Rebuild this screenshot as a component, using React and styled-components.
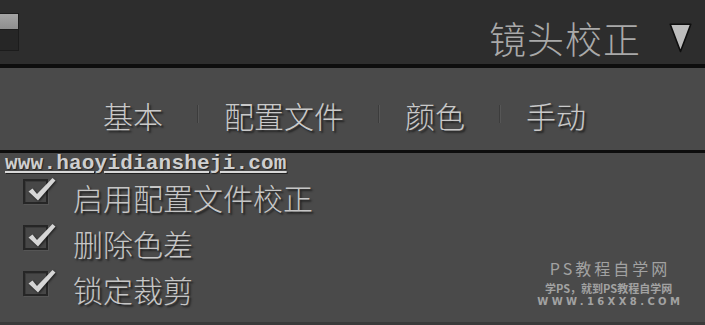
import React from "react";
import styled, { createGlobalStyle } from "styled-components";

const Global = createGlobalStyle`
  html, body { margin: 0; padding: 0; background: #4a4a4a; }
  body { font-family: "Noto Sans CJK SC", "Noto Sans", sans-serif; }
`;

const Frame = styled.div`
  width: 705px;
  height: 325px;
  overflow: hidden;
  display: flex;
  flex-direction: column;
  background: #4a4a4a;
`;

const Header = styled.header`
  height: 64px;
  flex: none;
  background: #2d2d2d;
  display: flex;
  align-items: flex-start;
`;

const Toggle = styled.div`
  margin-top: 13px;
  width: 19px;
  height: 38px;
  box-sizing: border-box;
  border: 1px solid #1c1c1c;
  border-left: none;
  background: #262626;
  display: flex;
  flex-direction: column;
`;

const ToggleKnob = styled.div`
  height: 15px;
  background: linear-gradient(#a4a4a4, #8e8e8e);
  border-bottom: 1px solid #1c1c1c;
`;

const Title = styled.h1`
  margin: 20px 0 0 auto;
  font-size: 37px;
  line-height: 1;
  font-weight: 300;
  color: #a9a9a9;
  letter-spacing: 1px;
`;

const Caret = styled.svg`
  margin: 23px 13px 0 28px;
  flex: none;
`;

const Rule = styled.div`
  flex: none;
  height: ${(p) => p.$h}px;
  background: ${(p) => p.$c || "#0d0d0d"};
`;

const TabBar = styled.nav`
  height: 82px;
  flex: none;
  box-sizing: border-box;
  padding: 32px 0 0 103px;
  display: flex;
  align-items: flex-start;
`;

const Tab = styled.span`
  font-size: 30px;
  line-height: 1;
  font-weight: 300;
  color: #c9c9c9;
  text-shadow: 2px 2px 2px rgba(0, 0, 0, 0.6);
`;

const TabSep = styled.span`
  width: 1px;
  height: 18px;
  margin: 5px 26px 0 34px;
  background: #3c3c3c;
  box-shadow: 1px 0 0 #565656;
`;

const Content = styled.section`
  position: relative;
  height: 169px;
  flex: none;
  display: flex;
  flex-direction: column;
  align-items: flex-start;
`;

const Site = styled.div`
  margin-left: 5px;
  font-family: "Liberation Mono", "Courier New", monospace;
  font-weight: bold;
  font-size: 21px;
  letter-spacing: 0.2px;
  line-height: 22px;
  color: #cfcfcf;
  text-decoration: underline;
  text-decoration-color: #d8d8d8;
  text-underline-offset: 2px;
  text-shadow: 1px 1px 1px rgba(0, 0, 0, 0.55);
`;

const Options = styled.div`
  margin-top: 4px;
  padding-left: 23px;
  display: flex;
  flex-direction: column;
  align-items: flex-start;
`;

const Row = styled.label`
  height: 46px;
  display: flex;
  align-items: flex-start;
`;

const Box = styled.span`
  position: relative;
  width: 25px;
  height: 25px;
  flex: none;
  box-sizing: border-box;
  border: 2px solid #262626;
  box-shadow: inset 1px 1px 0 #3a3a3a, 1px 1px 0 #555;
  background: #474747;
`;

const Tick = styled.svg`
  position: absolute;
  left: -2px;
  top: -8px;
  filter: drop-shadow(1px 1px 1px rgba(0, 0, 0, 0.6));
`;

const Label = styled.span`
  margin: 3px 0 0 25px;
  font-size: 30px;
  line-height: 1;
  font-weight: 300;
  color: #c6c6c6;
  text-shadow: 2px 2px 2px rgba(0, 0, 0, 0.6);
`;

const Stamp = styled.div`
  position: absolute;
  right: 25px;
  bottom: 15px;
  display: flex;
  flex-direction: column;
  align-items: center;
  color: #a2a2a2;
`;

const StampMain = styled.div`
  font-size: 16px;
  line-height: 16px;
  letter-spacing: 3px;
  margin-right: -3px;
`;

const StampSub = styled.div`
  margin-top: 7px;
  font-size: 11px;
  line-height: 11px;
  font-weight: bold;
`;

const StampUrl = styled.div`
  margin-top: 3px;
  font-family: "DejaVu Sans", sans-serif;
  font-size: 10px;
  line-height: 10px;
  letter-spacing: 3.4px;
  margin-right: -3.4px;
  font-weight: bold;
`;

const options = ["启用配置文件校正", "删除色差", "锁定裁剪"];
const tabs = ["基本", "配置文件", "颜色", "手动"];

function Check() {
  return (
    <Box>
      <Tick width="34" height="32" viewBox="0 0 34 32">
        <path
          d="M5.5 18.5 L9.5 15.5 L14 21 L29.5 5 L32.5 7.5 L15 27.5 Z"
          fill="#d6d6d6"
        />
      </Tick>
    </Box>
  );
}

export default function App() {
  return (
    <Frame>
      <Global />
      <Header>
        <Toggle>
          <ToggleKnob />
        </Toggle>
        <Title>镜头校正</Title>
        <Caret width="23" height="30" viewBox="0 0 23 30">
          <path
            d="M1.2 1.2 L21.8 1.2 L11.5 28.5 Z"
            fill="#bdbdbd"
            stroke="#0e0e0e"
            strokeWidth="1.6"
            strokeLinejoin="round"
          />
        </Caret>
      </Header>
      <Rule $h={4} />
      <TabBar>
        {tabs.map((t, i) => (
          <React.Fragment key={t}>
            {i > 0 && <TabSep />}
            <Tab>{t}</Tab>
          </React.Fragment>
        ))}
      </TabBar>
      <Rule $h={3} />
      <Content>
        <Site>www.haoyidiansheji.com</Site>
        <Options>
          {options.map((o) => (
            <Row key={o}>
              <Check />
              <Label>{o}</Label>
            </Row>
          ))}
        </Options>
        <Stamp>
          <StampMain>PS教程自学网</StampMain>
          <StampSub>学PS，就到PS教程自学网</StampSub>
          <StampUrl>WWW.16XX8.COM</StampUrl>
        </Stamp>
      </Content>
      <Rule $h={3} $c="#3a3a3a" />
    </Frame>
  );
}
